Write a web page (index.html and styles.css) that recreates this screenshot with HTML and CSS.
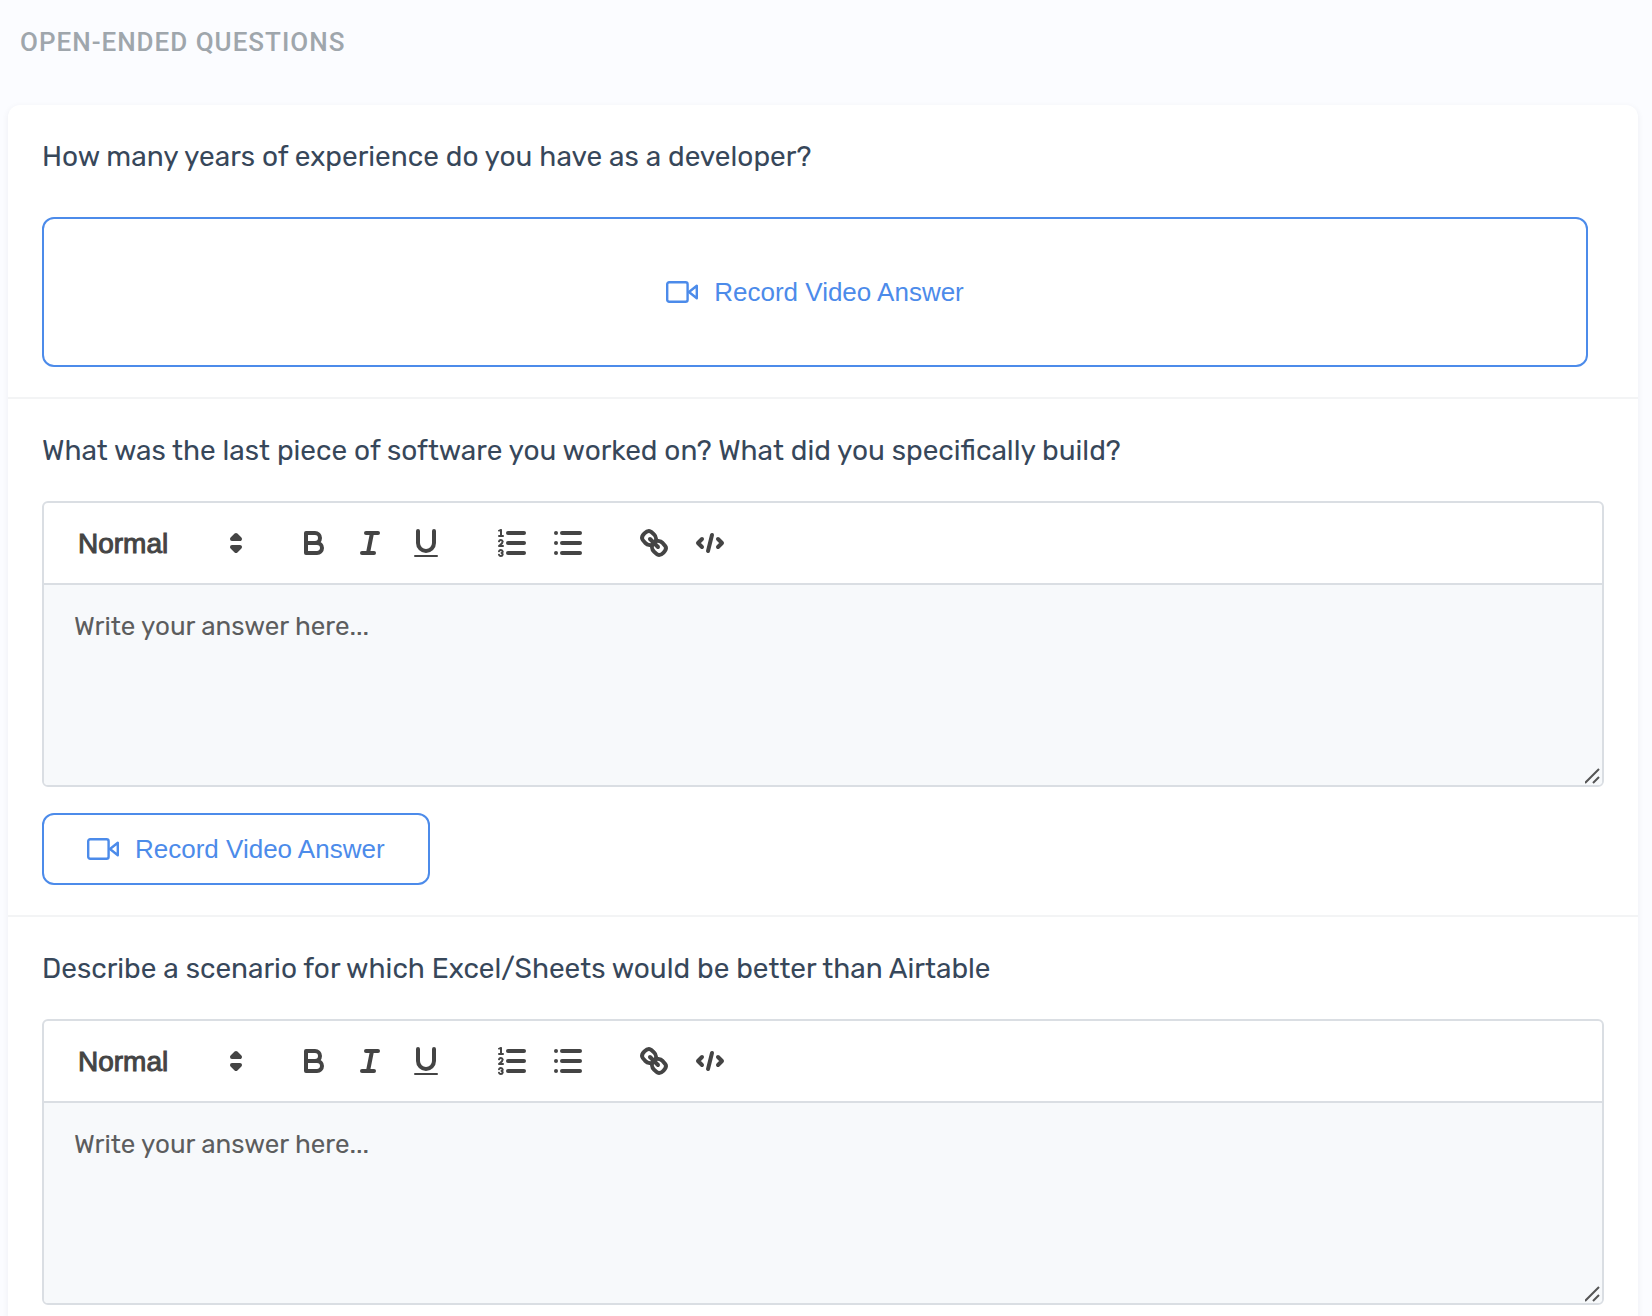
FILE: index.html
```html
<!DOCTYPE html>
<html lang="en" dir="ltr">
  <head>
    <meta charset="utf-8">
    <title>Open-ended questions</title>
    <link rel="stylesheet" href="styles.css">
  </head>
  <body>
    <!-- shared icons -->
    <svg class="icon-defs" aria-hidden="true">
      <symbol id="icon-video" viewBox="0 0 32 22">
        <rect x="1.2" y="1.2" width="20.4" height="19.6" rx="2"/>
        <path d="M23 11 L30.8 4.8 V17.2 Z"/>
      </symbol>
      <symbol id="icon-arrows" viewBox="0 0 18 18">
        <polygon class="solid" points="7 11 9 13 11 11 7 11"/>
        <polygon class="solid" points="7 7 9 5 11 7 7 7"/>
      </symbol>
      <symbol id="icon-bold" viewBox="0 0 18 18">
        <path d="M5,4H9.5A2.5,2.5,0,0,1,12,6.5v0A2.5,2.5,0,0,1,9.5,9H5V4Z"/>
        <path d="M5,9h5.5A2.5,2.5,0,0,1,13,11.5v0A2.5,2.5,0,0,1,10.5,14H5V9Z"/>
      </symbol>
      <symbol id="icon-italic" viewBox="0 0 18 18">
        <line x1="7" x2="13" y1="4" y2="4"/>
        <line x1="5" x2="11" y1="14" y2="14"/>
        <line x1="8" x2="10" y1="14" y2="4"/>
      </symbol>
      <symbol id="icon-underline" viewBox="0 0 18 18">
        <path d="M5,3V9a4.012,4.012,0,0,0,4,4H9a4.012,4.012,0,0,0,4-4V3"/>
        <rect class="flat" height="1" rx="0.5" ry="0.5" width="12" x="3" y="15"/>
      </symbol>
      <symbol id="icon-ordered" viewBox="0 0 18 18">
        <line x1="7" x2="15" y1="4" y2="4"/>
        <line x1="7" x2="15" y1="9" y2="9"/>
        <line x1="7" x2="15" y1="14" y2="14"/>
        <line class="thin" x1="2.5" x2="4.5" y1="5.5" y2="5.5"/>
        <path class="flat" d="M3.5,6A0.5,0.5,0,0,1,3,5.5V3.085l-0.276.138A0.5,0.5,0,0,1,2.053,3c-0.124-.247-0.023-0.324.224-0.447l1-.5A0.5,0.5,0,0,1,4,2.5v3A0.5,0.5,0,0,1,3.5,6Z"/>
        <path class="thin" d="M4.5,10.5h-2c0-.234,1.85-1.076,1.85-2.234A0.959,0.959,0,0,0,2.5,8.156"/>
        <path class="thin" d="M2.5,14.846a0.959,0.959,0,0,0,1.85-.109A0.7,0.7,0,0,0,3.75,14a0.688,0.688,0,0,0,.6-0.736,0.959,0.959,0,0,0-1.85-.109"/>
      </symbol>
      <symbol id="icon-bullet" viewBox="0 0 18 18">
        <line x1="6" x2="15" y1="4" y2="4"/>
        <line x1="6" x2="15" y1="9" y2="9"/>
        <line x1="6" x2="15" y1="14" y2="14"/>
        <line x1="3" x2="3" y1="4" y2="4"/>
        <line x1="3" x2="3" y1="9" y2="9"/>
        <line x1="3" x2="3" y1="14" y2="14"/>
      </symbol>
      <symbol id="icon-link" viewBox="0 0 18 18">
        <line x1="7" x2="11" y1="7" y2="11"/>
        <path d="M8.9,4.577a3.476,3.476,0,0,1,.36,4.679A3.476,3.476,0,0,1,4.577,8.9C3.185,7.5,2.035,6.4,4.217,4.217S7.5,3.185,8.9,4.577Z"/>
        <path d="M13.423,9.1a3.476,3.476,0,0,0-4.679-.36,3.476,3.476,0,0,0,.36,4.679c1.392,1.392,2.5,2.542,4.679.36S14.815,10.5,13.423,9.1Z"/>
      </symbol>
      <symbol id="icon-code" viewBox="0 0 18 18">
        <polyline points="5 7 3 9 5 11"/>
        <polyline points="13 7 15 9 13 11"/>
        <line x1="10" x2="8" y1="5" y2="13"/>
      </symbol>
      <symbol id="icon-grip" viewBox="0 0 16 16">
        <path d="M0 15 L14 1 M8 15 L14 9"/>
      </symbol>
    </svg>

    <h1 class="page-title">Open-Ended Questions</h1>

    <main class="card">
      <section class="question">
        <h2 class="question-text">How many years of experience do you have as a developer?</h2>
        <button type="button" class="record-btn record-btn-large">
          <svg class="video-icon"><use href="#icon-video"/></svg>
          Record Video Answer
        </button>
      </section>

      <section class="question">
        <h2 class="question-text" id="question-2">What was the last piece of software you worked on? What did you specifically build?</h2>
        <div class="editor">
          <div class="toolbar">
            <div class="picker">
              <select aria-label="Text style">
                <option>Normal</option>
              </select>
              <svg class="tool-icon"><use href="#icon-arrows"/></svg>
            </div>
            <div class="tool-group">
              <button type="button" aria-label="Bold"><svg class="tool-icon"><use href="#icon-bold"/></svg></button>
              <button type="button" aria-label="Italic"><svg class="tool-icon"><use href="#icon-italic"/></svg></button>
              <button type="button" aria-label="Underline"><svg class="tool-icon"><use href="#icon-underline"/></svg></button>
            </div>
            <div class="tool-group">
              <button type="button" aria-label="Numbered list"><svg class="tool-icon"><use href="#icon-ordered"/></svg></button>
              <button type="button" aria-label="Bulleted list"><svg class="tool-icon"><use href="#icon-bullet"/></svg></button>
            </div>
            <div class="tool-group">
              <button type="button" aria-label="Link"><svg class="tool-icon"><use href="#icon-link"/></svg></button>
              <button type="button" aria-label="Code"><svg class="tool-icon"><use href="#icon-code"/></svg></button>
            </div>
          </div>
          <div class="answer">
            <textarea aria-labelledby="question-2" placeholder="Write your answer here..."></textarea>
            <svg class="grip"><use href="#icon-grip"/></svg>
          </div>
        </div>
        <button type="button" class="record-btn">
          <svg class="video-icon"><use href="#icon-video"/></svg>
          Record Video Answer
        </button>
      </section>

      <section class="question">
        <h2 class="question-text" id="question-3">Describe a scenario for which Excel/Sheets would be better than Airtable</h2>
        <div class="editor">
          <div class="toolbar">
            <div class="picker">
              <select aria-label="Text style">
                <option>Normal</option>
              </select>
              <svg class="tool-icon"><use href="#icon-arrows"/></svg>
            </div>
            <div class="tool-group">
              <button type="button" aria-label="Bold"><svg class="tool-icon"><use href="#icon-bold"/></svg></button>
              <button type="button" aria-label="Italic"><svg class="tool-icon"><use href="#icon-italic"/></svg></button>
              <button type="button" aria-label="Underline"><svg class="tool-icon"><use href="#icon-underline"/></svg></button>
            </div>
            <div class="tool-group">
              <button type="button" aria-label="Numbered list"><svg class="tool-icon"><use href="#icon-ordered"/></svg></button>
              <button type="button" aria-label="Bulleted list"><svg class="tool-icon"><use href="#icon-bullet"/></svg></button>
            </div>
            <div class="tool-group">
              <button type="button" aria-label="Link"><svg class="tool-icon"><use href="#icon-link"/></svg></button>
              <button type="button" aria-label="Code"><svg class="tool-icon"><use href="#icon-code"/></svg></button>
            </div>
          </div>
          <div class="answer">
            <textarea aria-labelledby="question-3" placeholder="Write your answer here..."></textarea>
            <svg class="grip"><use href="#icon-grip"/></svg>
          </div>
        </div>
      </section>
    </main>
  </body>
</html>
```
FILE: styles.css
```css
* {
  box-sizing: border-box;
}

body {
  display: flex;
  flex-direction: column;
  min-height: 100vh;
  margin: 0;
  padding: 0 14px 0 8px;
  background-color: #fbfcff;
  font-family: Rubik, Roboto, sans-serif;
}

.icon-defs {
  display: none;
}

.page-title {
  margin: 0;
  padding: 26px 12px 47px;
  color: #9fa6ac;
  font-family: Roboto, sans-serif;
  font-size: 26px;
  font-weight: 500;
  line-height: 32px;
  letter-spacing: 1px;
  text-transform: uppercase;
}

.card {
  flex: 1;
  background-color: white;
  border-radius: 12px 12px 0 0;
  box-shadow: 0 2px 6px rgba(60, 70, 90, 0.08);
}

.question {
  padding: 35px 34px 30px;
}

.question + .question {
  border-top: 2px solid #f3f4f5;
}

.question-text {
  margin: 0 0 33px;
  color: #37475a;
  font-size: 28px;
  font-weight: 400;
  line-height: 34px;
}

/* Record buttons */
.record-btn {
  display: flex;
  align-items: center;
  justify-content: center;
  gap: 16px;
  height: 72px;
  padding: 0 43px;
  border: 2px solid #4c8bea;
  border-radius: 12px;
  background-color: white;
  color: #4c8bea;
  font-family: "Liberation Sans", Arial, sans-serif;
  font-size: 26px;
  cursor: pointer;
}

.record-btn-large {
  width: calc(100% - 16px);
  height: 150px;
  margin-top: 43px;
}

.video-icon {
  width: 32px;
  height: 22px;
  fill: none;
  stroke: currentColor;
  stroke-width: 2.4;
  stroke-linejoin: round;
}

/* Text editor */
.editor {
  margin-bottom: 26px;
  border: 2px solid #dadee3;
  border-radius: 6px;
  overflow: hidden;
}

.toolbar {
  display: flex;
  align-items: center;
  gap: 30px;
  padding: 16px;
  border-bottom: 2px solid #dadee3;
}

.picker {
  position: relative;
  width: 196px;
  height: 48px;
}

.picker select {
  width: 100%;
  height: 100%;
  padding: 0 16px;
  border: 2px solid transparent;
  appearance: none;
  background: none;
  color: #444;
  font-family: "Liberation Sans", Arial, sans-serif;
  font-size: 28px;
  -webkit-text-stroke: 1px #444;
}

.picker .tool-icon {
  position: absolute;
  top: 6px;
  right: 2px;
  pointer-events: none;
}

.tool-group {
  display: flex;
}

.tool-group button {
  width: 56px;
  height: 48px;
  padding: 6px 10px;
  border: none;
  background: none;
  cursor: pointer;
}

.tool-icon {
  display: block;
  width: 36px;
  height: 36px;
  fill: none;
  stroke: #444;
  stroke-width: 2;
  stroke-linecap: round;
  stroke-linejoin: round;
}

.solid {
  fill: #444;
}

.flat {
  fill: #444;
  stroke: none;
}

.thin {
  stroke-width: 1;
}

.answer {
  position: relative;
}

.answer textarea {
  display: block;
  width: 100%;
  height: 200px;
  padding: 24px 30px;
  border: none;
  background-color: #f7f9fb;
  color: #444;
  font-family: inherit;
  font-size: 26px;
  line-height: 36px;
  resize: none;
}

.answer textarea::placeholder {
  color: #5c5d5e;
}

.grip {
  position: absolute;
  right: 1px;
  bottom: 1px;
  width: 16px;
  height: 16px;
  fill: none;
  stroke: #555;
  stroke-width: 2;
}
```
